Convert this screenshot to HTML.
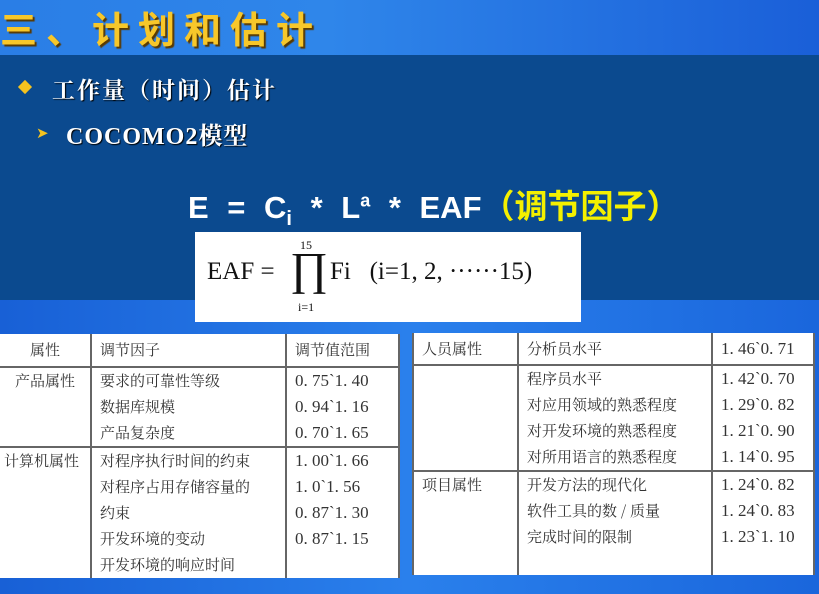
<!DOCTYPE html>
<html><head><meta charset="utf-8"><style>
body{margin:0;width:819px;height:594px;overflow:hidden;position:relative;background:#1f6fe0;font-family:"Liberation Serif","Noto Serif CJK SC",serif}
.top{position:absolute;left:0;top:0;width:819px;height:55px;background:linear-gradient(90deg,#2a7ee6,#2f86ea 40%,#1a5fd8)}
.dark{position:absolute;left:0;top:55px;width:819px;height:245px;background:#0b4a8f}
.bot{position:absolute;left:0;top:300px;width:819px;height:294px;background:linear-gradient(90deg,#1860d6,#2a80ec 50%,#1a66dc)}
.t{position:absolute;white-space:nowrap}
.title{left:0;top:0px;font:bold 37px "Noto Sans CJK SC",sans-serif;color:#f7c72a;text-shadow:2px 2px 1px #5a3a00;letter-spacing:9px}
.b1{left:52px;top:72px;font:bold 23px "Noto Serif CJK SC",serif;color:#fff;text-shadow:1px 1px 1px #000;letter-spacing:2px}
.b2{left:66px;top:116px;font:bold 24px "Liberation Serif","Noto Serif CJK SC",serif;color:#fff;text-shadow:1px 1px 1px #000;letter-spacing:1px}
.eq{left:188px;top:180px;font:bold 31px "Liberation Sans","Noto Sans CJK SC",sans-serif;color:#fff;word-spacing:10px}
.box{position:absolute;left:195px;top:232px;width:386px;height:90px;background:#fff}
table{position:absolute;border-collapse:collapse;background:#fff;font:15px "Noto Serif CJK SC",serif;color:#333}
td{border-left:2px solid #666;border-right:2px solid #666;vertical-align:top;padding:0 0 0 8px;line-height:26px}
tr.h td{border-bottom:2px solid #666}
.n{font-family:"Liberation Serif",serif;font-size:17px}
</style></head><body>
<div class="top"></div><div class="dark"></div><div class="bot"></div>
<div class="t title">三、计划和估计</div>
<div class="t" style="left:20px;top:82px;width:10px;height:10px;background:#f5c320;transform:rotate(45deg)"></div>
<div class="t b1">工作量（时间）估计</div>
<div class="t" style="left:36px;top:124px;color:#f5c320;font-size:15px">➤</div>
<div class="t b2">COCOMO2模型</div>
<div class="t eq">E = C<sub style="font-size:20px">i</sub> * L<sup style="font-size:18px">a</sup> * EAF<span style="color:#f4f000;font-size:33px;word-spacing:0">（调节因子）</span></div>
<div class="box"></div>
<div class="t" style="left:207px;top:258px;font-size:25px;color:#111">EAF =</div>
<div class="t" style="left:290px;top:242px;font-size:46px;color:#111;line-height:54px">∏</div>
<div class="t" style="left:300px;top:238px;font-size:12px;color:#111">15</div>
<div class="t" style="left:298px;top:300px;font-size:12px;color:#111">i=1</div>
<div class="t" style="left:330px;top:258px;font-size:25px;color:#111">Fi &nbsp;&nbsp;(i=1, 2, ······15)</div>

<table style="left:-2px;top:334px;width:402px;height:240px">
<tr class="h" style="height:32px"><td style="width:90px;text-align:center;padding:3px 0">属性</td><td style="width:185px;padding-top:3px">调节因子</td><td style="padding-top:3px">调节值范围</td></tr>
<tr class="h" style="height:78px"><td style="text-align:center;padding:0">产品属性</td><td>要求的可靠性等级<br>数据库规模<br>产品复杂度</td><td class="n">0. 75ˋ1. 40<br>0. 94ˋ1. 16<br>0. 70ˋ1. 65</td></tr>
<tr><td style="padding:0 0 0 4px">计算机属性</td><td>对程序执行时间的约束<br>对程序占用存储容量的<br>约束<br>开发环境的变动<br>开发环境的响应时间</td><td class="n">1. 00ˋ1. 66<br>1. 0ˋ1. 56<br>0. 87ˋ1. 30<br>0. 87ˋ1. 15</td></tr>
</table>

<table style="left:412px;top:333px;width:403px;height:242px">
<tr class="h" style="height:32px"><td style="width:95px;padding-top:3px">人员属性</td><td style="width:184px;padding-top:3px">分析员水平</td><td class="n" style="padding-top:3px">1. 46ˋ0. 71</td></tr>
<tr class="h" style="height:105px"><td></td><td>程序员水平<br>对应用领域的熟悉程度<br>对开发环境的熟悉程度<br>对所用语言的熟悉程度</td><td class="n">1. 42ˋ0. 70<br>1. 29ˋ0. 82<br>1. 21ˋ0. 90<br>1. 14ˋ0. 95</td></tr>
<tr><td>项目属性</td><td>开发方法的现代化<br>软件工具的数 / 质量<br>完成时间的限制</td><td class="n">1. 24ˋ0. 82<br>1. 24ˋ0. 83<br>1. 23ˋ1. 10</td></tr>
</table>
</body></html>
